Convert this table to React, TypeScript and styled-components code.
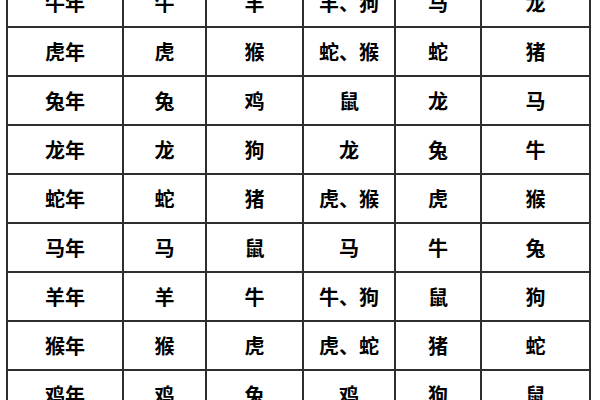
import React from "react";
import styled, { createGlobalStyle } from "styled-components";

const GlobalStyle = createGlobalStyle`
  html, body {
    margin: 0;
    padding: 0;
    background: #ffffff;
    overflow: hidden;
  }
`;

const Page = styled.div`
  width: 600px;
  height: 400px;
  overflow: hidden;
  padding-left: 6px;
  box-sizing: border-box;
`;

const Grid = styled.div`
  display: grid;
  grid-template-columns: 114px 81px 95px 90px 84px 107px;
  grid-auto-rows: 47px;
  gap: 2px;
  padding: 2px;
  margin-top: -23px;
  width: max-content;
  background: #2e2e2e;
`;

const Cell = styled.div`
  display: flex;
  align-items: center;
  justify-content: center;
  background: #ffffff;
  color: #000000;
  font-family: "Noto Sans CJK SC", "Noto Sans", sans-serif;
  font-size: 20px;
  font-weight: 700;
  letter-spacing: 0;
`;

const rows: string[][] = [
  ["牛年", "牛", "羊", "羊、狗", "马", "龙"],
  ["虎年", "虎", "猴", "蛇、猴", "蛇", "猪"],
  ["兔年", "兔", "鸡", "鼠", "龙", "马"],
  ["龙年", "龙", "狗", "龙", "兔", "牛"],
  ["蛇年", "蛇", "猪", "虎、猴", "虎", "猴"],
  ["马年", "马", "鼠", "马", "牛", "兔"],
  ["羊年", "羊", "牛", "牛、狗", "鼠", "狗"],
  ["猴年", "猴", "虎", "虎、蛇", "猪", "蛇"],
  ["鸡年", "鸡", "兔", "鸡", "狗", "鼠"],
];

function App() {
  return (
    <>
      <GlobalStyle />
      <Page>
        <Grid>
          {rows.map((row, i) =>
            row.map((text, j) => <Cell key={`${i}-${j}`}>{text}</Cell>)
          )}
        </Grid>
      </Page>
    </>
  );
}

export default App;
